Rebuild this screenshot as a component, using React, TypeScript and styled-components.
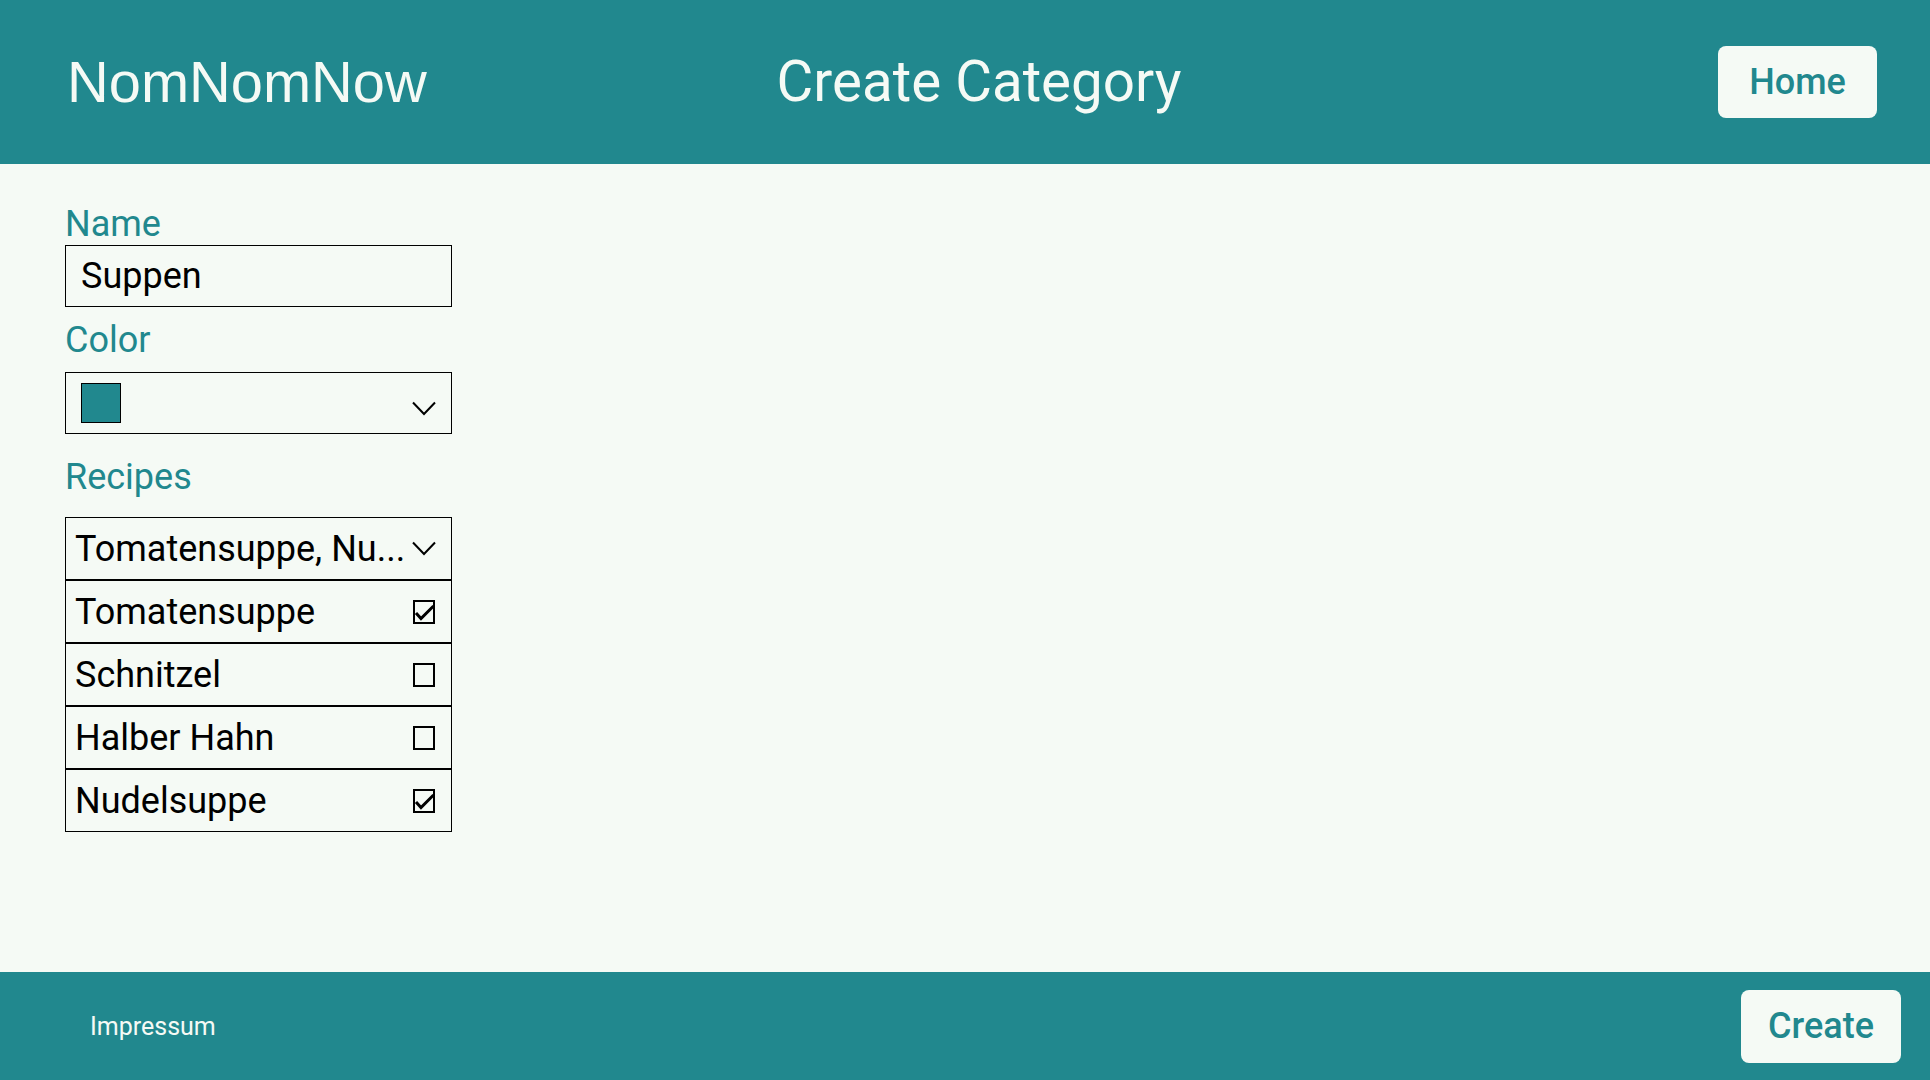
import React from "react";
import styled, { createGlobalStyle } from "styled-components";

const TEAL = "#21888e";
const LIGHT = "#f5faf5";

const GlobalStyle = createGlobalStyle`
  html, body {
    margin: 0;
    padding: 0;
    background: ${LIGHT};
    font-family: Roboto, "Liberation Sans", sans-serif;
  }
  * { box-sizing: border-box; }
`;

const Page = styled.div`
  min-height: 100vh;
  display: flex;
  flex-direction: column;
  background: ${LIGHT};
`;

const Header = styled.header`
  height: 164px;
  flex: none;
  background: ${TEAL};
  display: grid;
  grid-template-columns: 1fr auto 1fr;
  align-items: center;
  padding: 0 53px 0 67px;
`;

const Brand = styled.div`
  font-family: "Liberation Sans", Arial, sans-serif;
  font-size: 57.8px;
  color: ${LIGHT};
  justify-self: start;
`;

const Title = styled.h1`
  margin: 0 0 0 14px;
  font-family: Roboto, sans-serif;
  font-weight: 400;
  font-size: 56.5px;
  color: ${LIGHT};
`;

const LightButton = styled.button<{ $w: number; $h: number }>`
  justify-self: end;
  width: ${(p) => p.$w}px;
  height: ${(p) => p.$h}px;
  border: none;
  border-radius: 8px;
  background: ${LIGHT};
  color: ${TEAL};
  font-family: Roboto, sans-serif;
  font-weight: 500;
  font-size: 36px;
  padding: 0;
  cursor: pointer;
`;

const Main = styled.main`
  flex: 1;
  padding: 39px 0 0 65px;
  display: flex;
  flex-direction: column;
  align-items: flex-start;
`;

const Label = styled.label<{ $mt?: number }>`
  display: block;
  font-size: 36px;
  color: ${TEAL};
  margin-top: ${(p) => p.$mt ?? 0}px;
`;

const TextInput = styled.input`
  display: block;
  width: 387px;
  height: 62px;
  border: 1px solid #000;
  background: transparent;
  padding: 0 15px;
  font-family: Roboto, sans-serif;
  font-size: 36px;
  color: #000;
  outline: none;
`;

const ColorSelect = styled.div`
  margin-top: 11px;
  width: 387px;
  height: 62px;
  border: 1px solid #000;
  display: flex;
  align-items: center;
  justify-content: space-between;
  padding: 0 15px;
`;

const Swatch = styled.div<{ $color: string }>`
  width: 40px;
  height: 40px;
  border: 1px solid #000;
  background: ${(p) => p.$color};
`;

const ChevronWrap = styled.span<{ $mt?: number }>`
  display: flex;
  flex: none;
  margin-top: ${(p) => p.$mt ?? 0}px;
  margin-left: 8px;
`;

const MultiSelect = styled.div`
  margin-top: 19px;
  width: 387px;
  display: flex;
  flex-direction: column;
`;

const OptionBox = styled.div`
  height: 63px;
  border: 1px solid #000;
  display: flex;
  align-items: center;
  justify-content: space-between;
  padding: 0 15px 0 9px;
  font-size: 36px;
  color: #000;
`;

const SummaryText = styled.span`
  flex: 1;
  min-width: 0;
  overflow: hidden;
  white-space: nowrap;
`;

const CheckWrap = styled.span`
  display: flex;
  flex: none;
  margin-right: 1px;
`;

const Footer = styled.footer`
  height: 108px;
  flex: none;
  background: ${TEAL};
  display: flex;
  align-items: center;
  justify-content: space-between;
  padding: 0 29px 0 90px;
`;

const FooterLink = styled.a`
  font-family: Roboto, sans-serif;
  font-size: 25px;
  color: ${LIGHT};
  text-decoration: none;
`;

const Chevron = ({ mt }: { mt?: number }) => (
  <ChevronWrap $mt={mt}>
    <svg width="24" height="15" viewBox="0 0 24 15" fill="none">
      <polyline points="1,1.5 12,13 23,1.5" stroke="#000" strokeWidth="2" />
    </svg>
  </ChevronWrap>
);

const Checkbox = ({ checked }: { checked: boolean }) => (
  <CheckWrap>
    <svg width="22" height="24" viewBox="0 0 22 24" fill="none">
      <rect x="1" y="1" width="20" height="22" stroke="#000" strokeWidth="2" />
      {checked && <polyline points="3,13 8,18.5 20.5,6" stroke="#000" strokeWidth="3" />}
    </svg>
  </CheckWrap>
);

const recipes = [
  { name: "Tomatensuppe", checked: true },
  { name: "Schnitzel", checked: false },
  { name: "Halber Hahn", checked: false },
  { name: "Nudelsuppe", checked: true },
];

const truncate = (s: string, n: number) => (s.length > n ? s.slice(0, n) + "..." : s);

export default function App() {
  const selected = recipes.filter((r) => r.checked).map((r) => r.name).join(", ");
  return (
    <Page>
      <GlobalStyle />
      <Header>
        <Brand>NomNomNow</Brand>
        <Title>Create Category</Title>
        <LightButton $w={159} $h={72}>Home</LightButton>
      </Header>
      <Main>
        <Label>Name</Label>
        <TextInput defaultValue="Suppen" />
        <Label $mt={12}>Color</Label>
        <ColorSelect>
          <Swatch $color={TEAL} />
          <Chevron mt={10} />
        </ColorSelect>
        <Label $mt={22}>Recipes</Label>
        <MultiSelect>
          <OptionBox>
            <SummaryText>{truncate(selected, 16)}</SummaryText>
            <Chevron />
          </OptionBox>
          {recipes.map((r) => (
            <OptionBox key={r.name}>
              <span>{r.name}</span>
              <Checkbox checked={r.checked} />
            </OptionBox>
          ))}
        </MultiSelect>
      </Main>
      <Footer>
        <FooterLink href="#">Impressum</FooterLink>
        <LightButton $w={160} $h={73}>Create</LightButton>
      </Footer>
    </Page>
  );
}
